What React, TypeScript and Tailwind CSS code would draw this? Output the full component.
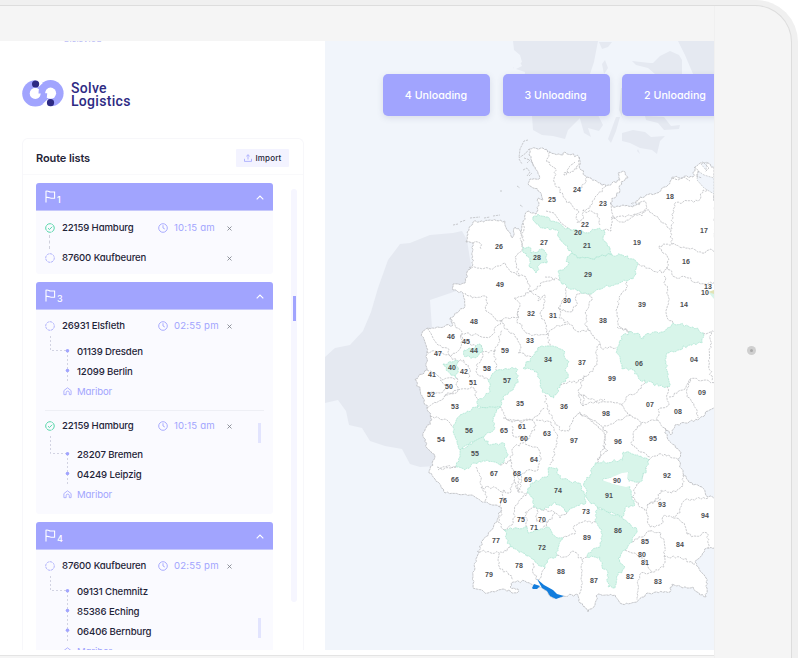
import React from "react";

type Pt = [number, number];

const parse = (s: string): Pt[] =>
  s.trim().split(/\s+/).map((p) => p.split(",").map(Number) as Pt);

const noise = (x: number, y: number) => {
  const v = Math.sin(x * 12.9898 + y * 78.233) * 43758.5453;
  return v - Math.floor(v) - 0.5;
};

// Breaks each edge into short irregular steps so borders read as natural boundaries.
const rough = (s: string, closed = false, amp = 3) => {
  const pts = parse(s);
  if (closed) pts.push(pts[0]);
  let out = `M${pts[0][0]} ${pts[0][1]}`;
  for (let i = 1; i < pts.length; i++) {
    const [ax, ay] = pts[i - 1];
    const [bx, by] = pts[i];
    const len = Math.hypot(bx - ax, by - ay);
    const n = Math.max(1, Math.round(len / 2.2));
    for (let k = 1; k < n; k++) {
      const x = ax + ((bx - ax) * k) / n;
      const y = ay + ((by - ay) * k) / n;
      const d = noise(x, y) * amp;
      out += `L${(x - ((by - ay) / len) * d).toFixed(1)} ${(y + ((bx - ax) / len) * d).toFixed(1)}`;
    }
    out += `L${bx} ${by}`;
  }
  return out + (closed ? "Z" : "");
};

const country =
  "466,242 467,232 473,222 490,220 505,221 507,230 512,238 515,227 521,232 523,223 525,215 529,211 536,214 538,210 538,198 543,200 540,192 528,184 530,179 540,178 535,167 529,155 529,149 543,148 550,152 563,155 565,152 579,157 581,170 587,177 606,186 620,180 618,173 623,171 628,178 621,182 620,190 610,203 613,207 623,205 633,207 640,197 657,193 668,185 672,177 693,177 695,167 703,162 714,167 717,300 716,408 708,411 698,420 675,425 671,435 665,428 667,437 681,452 678,460 683,473 693,485 702,487 708,497 717,498 717,548 707,548 695,562 706,578 707,588 706,597 697,592 693,587 683,588 672,584 670,592 647,593 637,602 622,604 615,595 598,594 595,605 588,612 585,607 580,603 578,595 563,596 553,598 543,588 533,585 525,581 513,582 510,587 518,589 517,593 503,589 488,593 473,588 473,577 477,557 483,540 497,522 501,507 485,502 470,495 445,493 438,482 429,473 435,457 427,448 423,433 432,420 427,408 420,390 415,379 427,370 427,352 422,333 428,328 453,325 450,318 465,307 463,293 453,290 453,284 465,283 468,270 473,265 473,243";

const greens = [
  "533,217 538,214 553,221 570,230 577,230 585,233 597,229 604,230 603,238 610,250 612,255 602,255 592,259 580,258 572,253 565,245 560,240 557,230 543,228 535,222",
  "572,253 567,257 568,265 558,272 561,282 567,287 587,294 603,288 622,282 633,279 638,263 623,255 612,255 602,255 592,259 580,258",
  "523,247 529,247 531,253 538,252 542,249 547,255 547,263 539,265 536,273 529,265 530,258 524,253",
  "632,332 640,335 643,339 646,334 663,332 673,323 693,327 703,333 702,343 690,345 667,353 665,360 667,370 669,387 663,387 640,380 633,370 622,369 617,350 623,335",
  "540,347 548,346 557,347 565,352 565,358 569,362 565,370 568,378 560,385 554,398 542,392 540,382 537,372 523,368 532,357",
  "498,370 510,369 516,368 518,380 513,390 503,397 500,407 487,408 477,407 478,400 490,392 488,380",
  "477,407 487,408 500,407 493,417 495,428 483,437 473,442 460,450 457,443 453,427 460,415",
  "460,450 473,442 483,437 490,445 505,444 507,457 500,465 487,460 473,463 465,470 456,467 460,457",
  "464,350 472,349 480,344 482,352 475,358 465,357",
  "443,364 457,360 458,370 456,378 450,373",
  "527,493 532,483 547,477 548,468 557,468 560,478 577,483 580,483 586,503 575,507 567,512 555,502 542,510 533,507 533,498",
  "595,463 623,460 623,452 635,455 649,460 646,470 640,482 628,482 628,472 622,475 610,478 602,480 610,483 628,485 632,497 635,505 625,508 622,517 607,512 597,507 588,500 584,483 590,475",
  "597,507 607,512 622,517 628,523 637,530 632,542 625,550 618,558 625,567 618,575 615,588 608,587 608,573 602,567 600,557 587,557 592,550 600,547 602,530 596,522",
  "504,530 517,528 527,527 528,533 548,527 553,535 563,538 558,548 557,555 547,560 545,568 537,563 523,553 510,547",
];

const borders = [
  "473,243 480,243 481,249",
  "469,267 490,269 505,263 511,272 519,276 515,257 522,250 521,232",
  "523,223 522,247",
  "465,293 472,298 487,297 486,311 498,321 508,318 518,317 520,306 514,298 523,296 530,291 526,277 519,276",
  "530,291 537,289 543,282 555,280",
  "450,318 462,334 478,335 490,337 498,325 502,320",
  "530,291 540,297 538,301 545,295 544,303 540,314 545,322 548,334 556,326 568,324",
  "519,311 517,320 526,333 534,335 548,334",
  "502,320 505,329 517,338 521,348 518,353 532,357",
  "428,328 433,338 438,345 447,348 450,356",
  "427,352 440,352 450,356 460,349 462,334",
  "460,335 465,342 476,346",
  "427,370 438,376 443,380 457,378",
  "450,356 456,361 464,360 470,369 468,378",
  "481,345 482,358 476,365 478,375 488,380",
  "495,350 496,370",
  "482,352 495,352 502,330",
  "440,380 446,389 440,393 428,392",
  "457,378 456,385 458,390 446,394 444,397",
  "458,390 474,388 478,400",
  "427,408 444,397 458,391",
  "430,417 447,420 453,427",
  "437,467 445,467 456,467",
  "438,470 456,467",
  "476,467 481,480 482,488 489,487 510,493 514,480",
  "481,487 486,492 485,501",
  "499,507 505,490",
  "500,465 511,461 514,476 518,492 518,475",
  "511,461 513,448 523,443 527,437 513,436 512,426",
  "503,418 512,422 532,420 536,426 530,437 524,440",
  "500,407 507,420 523,422 537,416 545,408",
  "545,395 547,409 555,422 561,431 569,431 573,420 580,413",
  "560,385 570,381 578,382 585,376 578,391 584,395 583,406 595,402 605,399",
  "580,413 598,426 604,432 606,444 602,450 597,463",
  "536,420 551,422 557,434 556,445 554,456 550,465",
  "525,444 537,447 541,460 538,470 528,470 521,475 520,490",
  "545,277 560,280",
  "579,157 577,169 564,175 571,165 575,162",
  "550,152 547,162 555,168 555,183 563,195 566,200 578,210 577,223",
  "587,177 582,188 573,192",
  "606,186 595,197 590,208 583,210 583,219 578,222",
  "583,210 598,214 600,225",
  "611,203 613,217 611,231 604,230",
  "613,217 625,217 635,214 642,216 647,208 645,201 635,206",
  "611,217 622,222 646,210 658,217 668,228 672,229 673,210 674,204 683,202 698,201 703,190 708,190",
  "671,230 672,244 659,246 663,253 669,259 667,267 664,272 652,270 638,263",
  "672,244 684,247 702,253 711,249 717,255",
  "667,267 675,277 688,278 700,284 717,282",
  "664,276 668,295 667,317 673,323",
  "627,282 626,290 619,297 617,315 620,327 632,332",
  "567,287 564,300 558,308 570,312 576,306 577,294 590,294 592,300 586,311 586,326",
  "560,308 559,318 569,324 580,332 590,331",
  "548,334 550,346",
  "586,326 594,336 600,343 601,348 616,348",
  "600,344 596,351 597,365 589,374 583,376",
  "617,327 630,332",
  "645,380 645,383 638,391 628,396 621,405 630,415 632,416",
  "583,406 578,395 585,395 596,402 608,402 622,404",
  "579,412 597,423 603,428 616,421 631,415",
  "632,416 641,423 657,420 658,410 669,405 667,387",
  "669,397 683,390 685,389 690,379 705,380 715,383",
  "690,379 687,397 694,406 698,418",
  "703,333 715,332",
  "711,332 709,365 712,381",
  "657,420 665,428",
  "641,423 633,434 632,445 638,450 650,457",
  "603,428 607,433 604,448 608,451 597,460",
  "649,460 655,456 665,454 670,457 678,460",
  "649,460 643,475 637,484 632,497 645,511",
  "683,475 683,486 672,493 661,490 658,499 647,505",
  "661,499 647,505 648,519 650,527",
  "650,527 661,524 665,515 676,518 685,526 687,534",
  "708,498 685,500 680,508 680,513 673,517",
  "687,534 694,536 707,533 708,548",
  "650,531 661,533 665,548 664,567 652,572",
  "664,557 680,557 695,564",
  "625,550 635,553 643,558 648,567 652,572",
  "652,572 640,574 638,585 637,600",
  "632,542 645,535 650,531",
  "587,557 582,560 581,590 579,595",
  "567,512 560,518 554,512 533,507",
  "596,522 583,522 573,528 575,534 563,538",
  "557,555 564,557 573,551 582,560",
  "545,568 538,580 533,573 533,563",
  "510,547 507,551 499,554 500,569 508,573 513,580",
  "477,551 499,553",
  "504,530 498,522 502,510",
  "504,530 512,525 516,505 527,493",
  "518,492 527,493",
  "527,527 525,512 533,507",
  "537,510 536,521 548,522 555,513",
  "548,522 543,528",
];

const islands =
  "453,225 458,224M460,222 466,220M470,218 480,217M484,218 490,217M493,216 500,215M520,205 523,207M517,186 520,188M500,191 502,191M528,140 524,141 520,149 519,158 526,153 529,149M519,159 522,164M524,158 530,160 527,163M531,161 534,166M523,170 527,168 530,172 527,176M529,176 532,173";

const labels =
  "24,577,190 25,552,200 23,603,204 18,670,197 22,585,225 20,578,233 21,587,246 27,544,243 26,499,247 28,537,258 19,637,243 17,704,231 16,686,262 29,588,275 13,708,287 10,705,293 49,500,285 30,567,301 31,553,316 32,531,314 39,642,305 14,684,305 38,603,321 48,474,322 33,530,341 46,451,337 45,466,342 44,474,351 47,438,354 59,505,351 34,548,360 37,582,363 06,639,364 04,694,360 40,452,368 42,464,372 58,487,369 41,432,375 57,507,381 51,473,383 50,449,387 99,612,379 09,702,393 52,431,395 35,520,404 36,564,407 07,650,405 08,678,412 98,606,414 53,455,407 56,469,431 65,504,431 61,522,427 60,524,439 63,547,434 54,441,440 97,574,441 96,618,442 95,653,439 55,475,454 64,534,460 67,494,474 68,517,474 69,528,480 66,455,480 92,667,476 90,617,481 74,558,491 91,609,496 76,503,501 93,662,505 94,705,516 73,586,512 75,521,520 70,542,520 71,534,528 86,618,531 89,587,538 77,496,541 72,542,548 85,645,542 80,642,555 81,645,563 84,680,545 78,519,566 79,489,575 88,561,572 87,594,581 82,630,577 83,658,582"
    .split(" ")
    .map((s) => s.split(","));

function RegionMap() {
  return (
    <svg viewBox="325 41 389 609" className="block h-[609px] w-[389px]">
      <g fill="#e5e9f1">
        <path d="M467 240L462 231L453 233L430 235L410 243L400 244L388 260L378 288L371 312L363 331L350 345L335 348L325 357V403L338 400L346 411L349 425L362 428L370 441L385 446L402 449L410 464L420 467L436 466L440 440L430 300L474 285Z" />
        <path d="M513 41H598L594 62L590 74L582 116L568 130L565 139L553 136L542 135L533 130L532 116L522 100L525 72L513 68L522 62L520 55L514 50Z" />
        <path d="M599 42H612L608 47L602 49ZM602 64L605 60L608 68L604 74ZM579 115L597 113L603 125L599 131L588 128L591 137L584 133ZM616 117H620L616 131L611 143L608 139Z" />
        <path d="M632 61L650 63L653 63L660 56L670 51L679 55L682 60V74H655L648 68L636 65ZM621 88H622V116L624 121L619 110ZM645 116L664 117L671 126L680 125L679 129L664 130L658 123L646 120ZM622 133L633 130L645 132L651 137L665 136L660 141L657 154L652 150L640 148L630 143L622 141ZM678 41H714V74H693L685 55Z" />
        <path d="M637 151L640 154L638 149Z" />
      </g>
      <path d="M514 57L518 58L522 66L514 70Z" fill="#f1f5fb" />
      <path d={rough(country, true, 2.6)} fill="#fff" stroke="#b7b9bc" strokeWidth=".8" strokeDasharray="2.5 .6" />
      <path d="M698 171L704 175L714 178V194L704 188L697 180ZM701 164L707 162L706 170ZM640 203L634 206L631 203Z" fill="#f1f5fb" stroke="#bfc1c4" strokeWidth=".7" strokeDasharray="2 1" />
      <g fill="none" stroke="#bcbec1" strokeWidth=".8" strokeDasharray="2.2 .9">
        {borders.map((b) => (
          <path key={b} d={rough(b)} />
        ))}
        <path d={islands.split("M").map((s) => "M" + s.replace(/ /g, "L")).join("")} />
        <path d="M672 178L678 180L684 177L690 181M694 167L699 171L696 176L702 178M704 163L709 168L705 172M546 211L554 213L561 223L572 231" />
      </g>
      {greens.map((g) => (
        <path key={g} d={rough(g, true)} fill="#d8f5ea" stroke="#aee6d4" strokeWidth=".8" strokeDasharray="2 .6" />
      ))}
      <path d="M602 480L610 478L622 473L628 472L627 480L633 485L626 487L613 484Z" fill="#fff" />
      <path d="M709 293H714V299Z" fill="#d8f5ea" />
      <path d="M708 292L714 290V294Z" fill="#e1e3b5" />
      <path d="M537 579L544 585L553 590L557 594L564 596L556 599L550 596L547 591L542 588ZM532 588L534 584L540 586L537 589L533 589Z" fill="#127ddd" />
      <g fill="#4b4d52" fontFamily="'Liberation Sans', Arial, sans-serif" fontSize="7" fontWeight="700" textAnchor="middle">
        {labels.map(([n, x, y]) => (
          <text key={n + x} x={x} y={Number(y) + 2.4}>{n}</text>
        ))}
      </g>
    </svg>
  );
}

function Logo() {
  return (
    <svg viewBox="0 0 42 27" className="-mt-[3px] h-[27px] w-[42px]">
      <circle cx="13.3" cy="13.4" r="13.1" fill="#a1a4fe" />
      <circle cx="28.5" cy="13.2" r="13.1" fill="#a1a4fe" />
      <path d="M13.5 0L18 0L21 3L16 7.5ZM28.5 27L24 27L20.5 24L26 19Z" fill="#fff" />
      <circle cx="13.3" cy="13.4" r="5.6" fill="#fff" />
      <circle cx="28.5" cy="13.2" r="5.6" fill="#fff" />
      <path d="M16.5 13.5C16.5 9.5 17.5 6.5 20.6 3.6L25.5 8.4C23.6 9.6 23 11.4 23.2 13.4ZM25.2 13.3C25.2 17.3 24 20.8 21 23.4L16.4 18.2C18.2 16.8 18.8 15.4 18.8 13.2Z" fill="#a1a4fe" />
      <circle cx="13.6" cy="4" r="3.6" fill="#2d2a83" />
      <circle cx="28.5" cy="22.7" r="3.6" fill="#2d2a83" />
    </svg>
  );
}

const Flag = () => (
  <svg viewBox="0 0 11 13" className="h-[13px] w-[11px]" fill="none" stroke="#fff" strokeWidth="1.1">
    <path d="M1 12.5V1.2C3 .4 4 2 5.5 2H9.6V8.2H6C4.5 8.2 3.5 6.8 1 7.6" />
  </svg>
);

const Clock = () => (
  <svg viewBox="0 0 10 10" className="h-[10px] w-[10px]" fill="none" stroke="#a1a4fe" strokeWidth=".9">
    <circle cx="5" cy="5" r="4.3" />
    <path d="M5 2.2V5L6.8 6" />
  </svg>
);

const Status = ({ done }: { done?: boolean }) => (
  <svg viewBox="0 0 10 10" className="h-[10px] w-[10px]" fill="none" stroke={done ? "#45d3a0" : "#a9acfa"} strokeWidth=".9">
    <circle cx="5" cy="5" r="4.3" strokeDasharray={done ? "5 .5" : "2.6 .6"} />
    {done && <path d="M3 5.2L4.5 6.5L7.2 3.7" />}
  </svg>
);

const House = () => (
  <svg viewBox="0 0 10 10" className="-mt-[2px] h-[9px] w-[9px]" fill="none" stroke="#a1a4fe" strokeWidth=".9">
    <path d="M1 8.5V4L5 .9L9 4V8.5H7V6.3A1.2 1.2 0 0 0 3.5 6.3V8.5H1" />
  </svg>
);

function MainRow({ name, time, done }: { name: string; time?: string; done?: boolean }) {
  return (
    <div className="flex h-[20px] items-center pl-[9px]">
      <Status done={done} />
      <span className="ml-[7px] w-[96px] whitespace-nowrap pt-[1px]">{name}</span>
      <span className="flex w-[69px] items-center gap-[6px] whitespace-nowrap font-normal text-[#a1a4fe]">
        {time && <><Clock /><span className="pt-[1px] tracking-[0.18px]">{time}</span></>}
      </span>
      <svg viewBox="0 0 5 5" className="mt-[1px] h-[5px] w-[5px]" stroke="#777c87" strokeWidth=".8">
        <path d="M.5 .5L4.5 4.5M4.5 .5L.5 4.5" />
      </svg>
    </div>
  );
}

function Stops({ items, gap }: { items: string[]; gap: number }) {
  const end = gap + items.length * 20 + 2;
  return (
    <div className="relative" style={{ paddingTop: gap }}>
      <svg className="absolute left-0 top-0 overflow-visible" width="40" height={end}>
        <g fill="none" stroke="#d2d3e2" strokeDasharray="2 2">
          <path d={`M14.5 0V${gap + 9.5}H30`} />
          <path d={`M31.5 ${gap + 10}V${end}`} />
        </g>
        {items.map((s, i) => (
          <circle key={s} cx="31.5" cy={gap + 9.8 + i * 19.7} r="1.8" fill="#a1a4fe" />
        ))}
      </svg>
      {items.map((s) => (
        <div key={s} className="flex h-[20px] items-center pl-[41px] pt-[2px]">{s}</div>
      ))}
      <div className="flex h-[20px] items-center gap-[5px] pl-[27px] pt-[2px] font-normal text-[#a1a4fe]">
        <House />Maribor
      </div>
    </div>
  );
}

function RouteCard({ n, height, children }: { n: number; height: string; children: React.ReactNode }) {
  return (
    <section className={`w-[237px] shrink-0 overflow-hidden rounded-[3px] bg-[#fafaff] ${height}`}>
      <header className="flex h-[28px] items-center justify-between border-b border-[#c6c8fb] bg-[#a1a4fe] pl-[9px] pr-[9px] text-white">
        <span className="flex items-end"><Flag /><span className="relative top-[1px] ml-px text-[9px] leading-[9px]">{n}</span></span>
        <svg viewBox="0 0 8 5" className="mt-[2px] h-[5px] w-[8px]" fill="none" stroke="#fff" strokeWidth="1.1"><path d="M.7 4.3L4 1L7.3 4.3" /></svg>
      </header>
      {children}
    </section>
  );
}

const Grip = ({ top }: { top: string }) => (
  <div className={`absolute right-[12px] h-[20px] w-[3px] bg-[#e2e4fe] ${top}`} />
);

function Sidebar() {
  return (
    <aside className="flex h-[609px] w-[325px] shrink-0 flex-col overflow-hidden bg-white pl-[22px]">
      <div className="ml-[42px] h-[1px] w-[40px] overflow-hidden"><div className="-mt-[7px] text-[9px] leading-[9px] text-[#b9bbf5]">plslsylog</div></div>
      <div className="mt-[38px] flex h-[30px] items-center">
        <Logo />
        <div className="-mt-[1px] ml-[7px] font-[Roboto] text-[14px] font-medium leading-[13px] tracking-[0.3px] text-[#2d2a83]">Solve<br />Logistics</div>
      </div>
      <div className="mt-[28px] w-[282px] grow rounded-t-[6px] border-x border-t border-[#f7f7fa]">
        <div className="flex h-[36px] items-center justify-between border-b border-[#f9f9fb] pl-[13px] pr-[14px] pt-[2px]">
          <h1 className="pt-[1px] text-[11px] font-semibold tracking-[-0.1px]">Route lists</h1>
          <button className="flex h-[18px] w-[53px] items-center justify-center gap-[4px] rounded-[1px] bg-[#f3f3ff] text-[8px] font-medium tracking-[0.15px]">
            <svg viewBox="0 0 8 8" className="h-[8px] w-[8px]" fill="none" stroke="#a1a4fe" strokeWidth=".8"><path d="M4 5.5V.8M2.3 2.3L4 .7L5.7 2.3M.5 4.8V7.4H7.5V4.8" /></svg>
            Import
          </button>
        </div>
        <div className="flex h-[475px] overflow-hidden pl-[13px] pt-[8px]">
          <div className="flex flex-col gap-[8px] text-[9.6px] font-medium tracking-[-0.12px]">
            <RouteCard n={1} height="h-[91px]">
              <div className="relative flex flex-col gap-[9.5px] pt-[7px]">
                <MainRow name="22159 Hamburg" time="10:15 am" done />
                <MainRow name="87600 Kaufbeuren" />
                <div className="absolute left-[13px] top-[24px] h-[14px] border-l border-dashed border-[#cfd0dc]" />
              </div>
            </RouteCard>
            <RouteCard n={3} height="h-[232px]">
              <div className="relative pt-[6px]">
                <MainRow name="26931 Elsfleth" time="02:55 pm" />
                <Stops items={["01139 Dresden", "12099 Berlin"]} gap={5} />
                <div className="mx-[9px] mt-[9px] h-px bg-[#eeeff5]" />
                <div className="pt-[5px]">
                  <MainRow name="22159 Hamburg" time="10:15 am" done />
                  <Stops items={["28207 Bremen", "04249 Leipzig"]} gap={8} />
                </div>
                <Grip top="top-[113px]" />
              </div>
            </RouteCard>
            <RouteCard n={4} height="h-[140px]">
              <div className="relative pt-[6px]">
                <MainRow name="87600 Kaufbeuren" time="02:55 pm" />
                <Stops items={["09131 Chemnitz", "85386 Eching", "06406 Bernburg"]} gap={5} />
                <Grip top="top-[68px]" />
              </div>
            </RouteCard>
          </div>
          <div className="ml-[18px] mt-[6px] h-[413px] w-[6px] rounded-full bg-[#f6f6ff] pl-[2px] pt-[107px]">
            <div className="h-[25px] w-[3px] bg-[#a1a4fe]" />
          </div>
        </div>
      </div>
    </aside>
  );
}

export default function App() {
  return (
    <div className="h-[658px] w-[798px] overflow-hidden bg-white font-[Inter,sans-serif] text-[#1f2438] [font-feature-settings:'cv11']">
      <div className="h-full rounded-tr-[42px] bg-[#f0f0f0] pr-[6px] pt-[5px]">
        <div className="flex h-full overflow-hidden rounded-tr-[37px] border-r border-t border-[#dddddd] bg-[#f5f5f5]">
          <main className="w-[714px] shrink-0 pt-[35px]">
            <div className="flex h-[615px] border-b border-[#e4e4e4] bg-white">
              <Sidebar />
              <div className="relative h-[609px] w-[389px] overflow-hidden bg-[#f1f5fb]">
                <RegionMap />
                <div className="absolute left-[58px] top-[33px] flex gap-[12.5px]">
                  {[4, 3, 2].map((n) => (
                    <button key={n} className="h-[42px] w-[107px] shrink-0 rounded-[5px] bg-[#a1a4fe] pr-[1px] pt-[2px] text-[10.7px] font-medium text-white shadow-[0_2px_6px_rgba(80,90,130,0.15)]">
                      {n} Unloading
                    </button>
                  ))}
                </div>
              </div>
            </div>
          </main>
          <div className="flex grow justify-center border-l border-[#f0f0f0] pr-[3px] pt-[340px]">
            <div className="flex h-[9px] w-[9px] items-center justify-center rounded-full bg-[#cfcfcf]">
              <div className="h-[3px] w-[3px] rounded-full bg-[#a9a9a9]" />
            </div>
          </div>
        </div>
      </div>
    </div>
  );
}
